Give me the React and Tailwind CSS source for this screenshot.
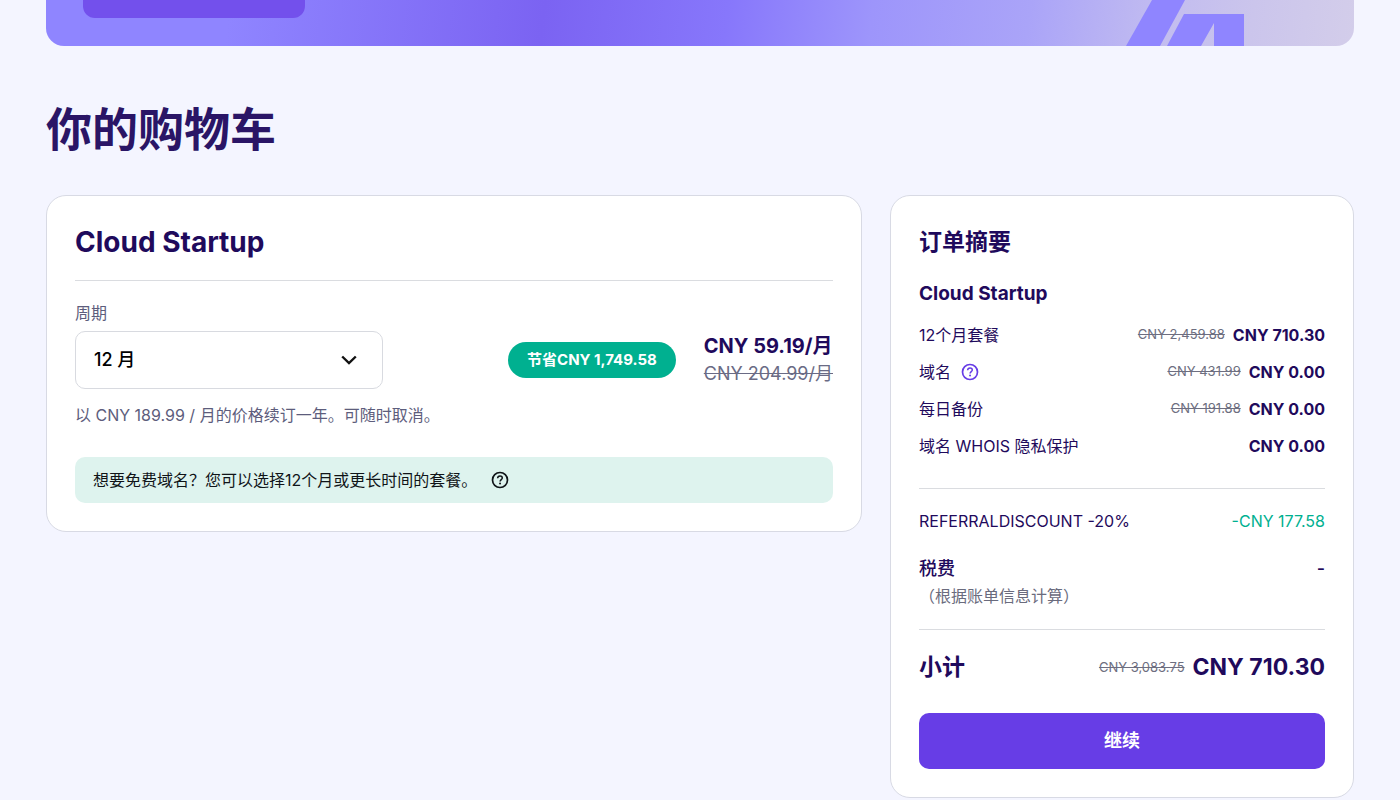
import React from "react";

const summaryRows = [
  { label: "12个月套餐", old: "CNY 2,459.88", price: "CNY 710.30" },
  { label: "域名", help: true, old: "CNY 431.99", price: "CNY 0.00" },
  { label: "每日备份", old: "CNY 191.88", price: "CNY 0.00" },
  { label: "域名 WHOIS 隐私保护", price: "CNY 0.00" },
];

function HelpIcon() {
  return (
    <svg viewBox="0 0 18 18" className="size-[18px]" fill="none" aria-hidden="true">
      <circle cx="9" cy="9" r="7.5" stroke="currentColor" strokeWidth="1.7" />
      <path
        d="M6.600 7.200c.1-1.400 1.100-2.200 2.400-2.200s2.300.8 2.300 2c0 1.500-2.200 1.700-2.200 3.400"
        stroke="currentColor"
        strokeWidth="1.5"
      />
      <circle cx="9.050" cy="12.600" r="1" fill="currentColor" />
    </svg>
  );
}

function Banner() {
  return (
    <section className="relative flex h-[46px] items-start overflow-hidden rounded-b-[18px] bg-[linear-gradient(97deg,#8f85ff_0%,#8f85ff_14%,#7b63f2_38%,#8777fb_52%,#9d95fb_63%,#aaa4f8_75%,#c2bcf0_85%,#cbc5ec_92%,#d3cdea_100%)] px-[37px]">
      <div className="h-[18px] w-[222px] rounded-b-xl bg-[#7350ec]" />
      <svg
        viewBox="0 0 118 46"
        className="absolute top-0 right-[110px] h-[46px] w-[118px]"
        fill="#8f85ff"
        aria-hidden="true"
      >
        <path d="M26 0H59L34 46H0Z" />
        <path d="M58 14H118V46H88V23L75 46H41Z" />
      </svg>
    </section>
  );
}

function CartItem() {
  return (
    <section className="min-w-0 flex-1 rounded-[20px] border border-[#d8dae4] bg-white p-7">
      <h2 className="border-b border-[#dadce0] pb-5 text-[28px] leading-9 font-bold">Cloud Startup</h2>
      <label htmlFor="period" className="mt-5 block text-base leading-6 text-[#5d5d7c]">
        周期
      </label>
      <div className="mt-1.5 flex items-center justify-between">
        <div className="relative w-[308px]">
          <select
            id="period"
            className="h-[58px] w-full appearance-none rounded-[10px] border border-[#d8dae0] bg-white px-[18px] text-lg font-medium text-black"
          >
            <option>12 月</option>
          </select>
          <svg
            viewBox="0 0 16 10"
            className="pointer-events-none absolute top-6 right-[26px] h-2.5 w-4"
            fill="none"
            stroke="#111"
            strokeWidth="2.400"
            aria-hidden="true"
          >
            <path d="M1.200 1.500L8 8L14.800 1.500" />
          </svg>
        </div>
        <div className="flex items-center gap-7">
          <span className="flex h-9 items-center rounded-full bg-[#00b090] px-[19px] text-[15px] font-bold text-white">
            节省CNY 1,749.58
          </span>
          <div>
            <p className="text-xl leading-7 font-bold">CNY 59.19/月</p>
            <p className="text-lg leading-7 text-[#6a6b85] line-through">CNY 204.99/月</p>
          </div>
        </div>
      </div>
      <p className="mt-3.5 text-base leading-6 text-[#5d5d7c]">以 CNY 189.99 / 月的价格续订一年。可随时取消。</p>
      <div className="mt-[30px] flex h-[46px] items-center gap-3.5 rounded-[10px] bg-[#def3ee] px-[18px] text-base text-[#101418]">
        <span>想要免费域名？您可以选择12个月或更长时间的套餐。</span>
        <button type="button" aria-label="帮助">
          <HelpIcon />
        </button>
      </div>
    </section>
  );
}

function OrderSummary() {
  return (
    <aside className="w-[464px] shrink-0 rounded-[20px] border border-[#d8dae4] bg-white p-7">
      <h2 className="text-[23px] leading-9 font-bold">订单摘要</h2>
      <h3 className="mt-4 text-[19px] leading-9 font-bold">Cloud Startup</h3>
      <dl className="mt-1">
        {summaryRows.map((row) => (
          <div key={row.label} className="flex h-[37px] items-center justify-between">
            <dt className="flex items-center gap-2.5 text-base">
              {row.label}
              {row.help && (
                <button type="button" aria-label="域名帮助" className="text-[#673de6]">
                  <HelpIcon />
                </button>
              )}
            </dt>
            <dd className="flex items-center gap-2">
              {row.old && <s className="text-[13px] text-[#6d6e80]">{row.old}</s>}
              <span className="text-base font-bold">{row.price}</span>
            </dd>
          </div>
        ))}
      </dl>
      <dl className="mt-6 border-y border-[#dadce0] py-5">
        <div className="flex items-center justify-between text-base leading-6">
          <dt>REFERRALDISCOUNT -20%</dt>
          <dd className="text-[#00b090]">-CNY 177.58</dd>
        </div>
        <div className="mt-[22px] flex items-center justify-between text-lg leading-7 font-medium">
          <dt>税费</dt>
          <dd>-</dd>
        </div>
        <dd className="text-base leading-[26px] text-[#6a6b7d]">（根据账单信息计算）</dd>
      </dl>
      <div className="mt-[19px] flex items-center justify-between leading-9">
        <span className="text-[23px] font-bold">小计</span>
        <span className="flex items-center gap-2">
          <s className="text-[13px] text-[#6d6e80]">CNY 3,083.75</s>
          <strong className="text-[23px] font-bold">CNY 710.30</strong>
        </span>
      </div>
      <button type="button" className="mt-7 h-14 w-full rounded-[10px] bg-[#673de6] text-lg font-bold text-white">
        继续
      </button>
    </aside>
  );
}

export default function App() {
  return (
    <div className="min-h-screen bg-[#f4f5ff] px-[46px] font-['Inter','Noto_Sans_CJK_SC',sans-serif] text-[#1f0a5c]">
      <Banner />
      <main>
        <h1 className="pt-[47px] pb-[30px] text-[46px] leading-[72px] font-bold text-[#2a1566]">你的购物车</h1>
        <div className="flex items-start gap-7">
          <CartItem />
          <OrderSummary />
        </div>
      </main>
    </div>
  );
}
